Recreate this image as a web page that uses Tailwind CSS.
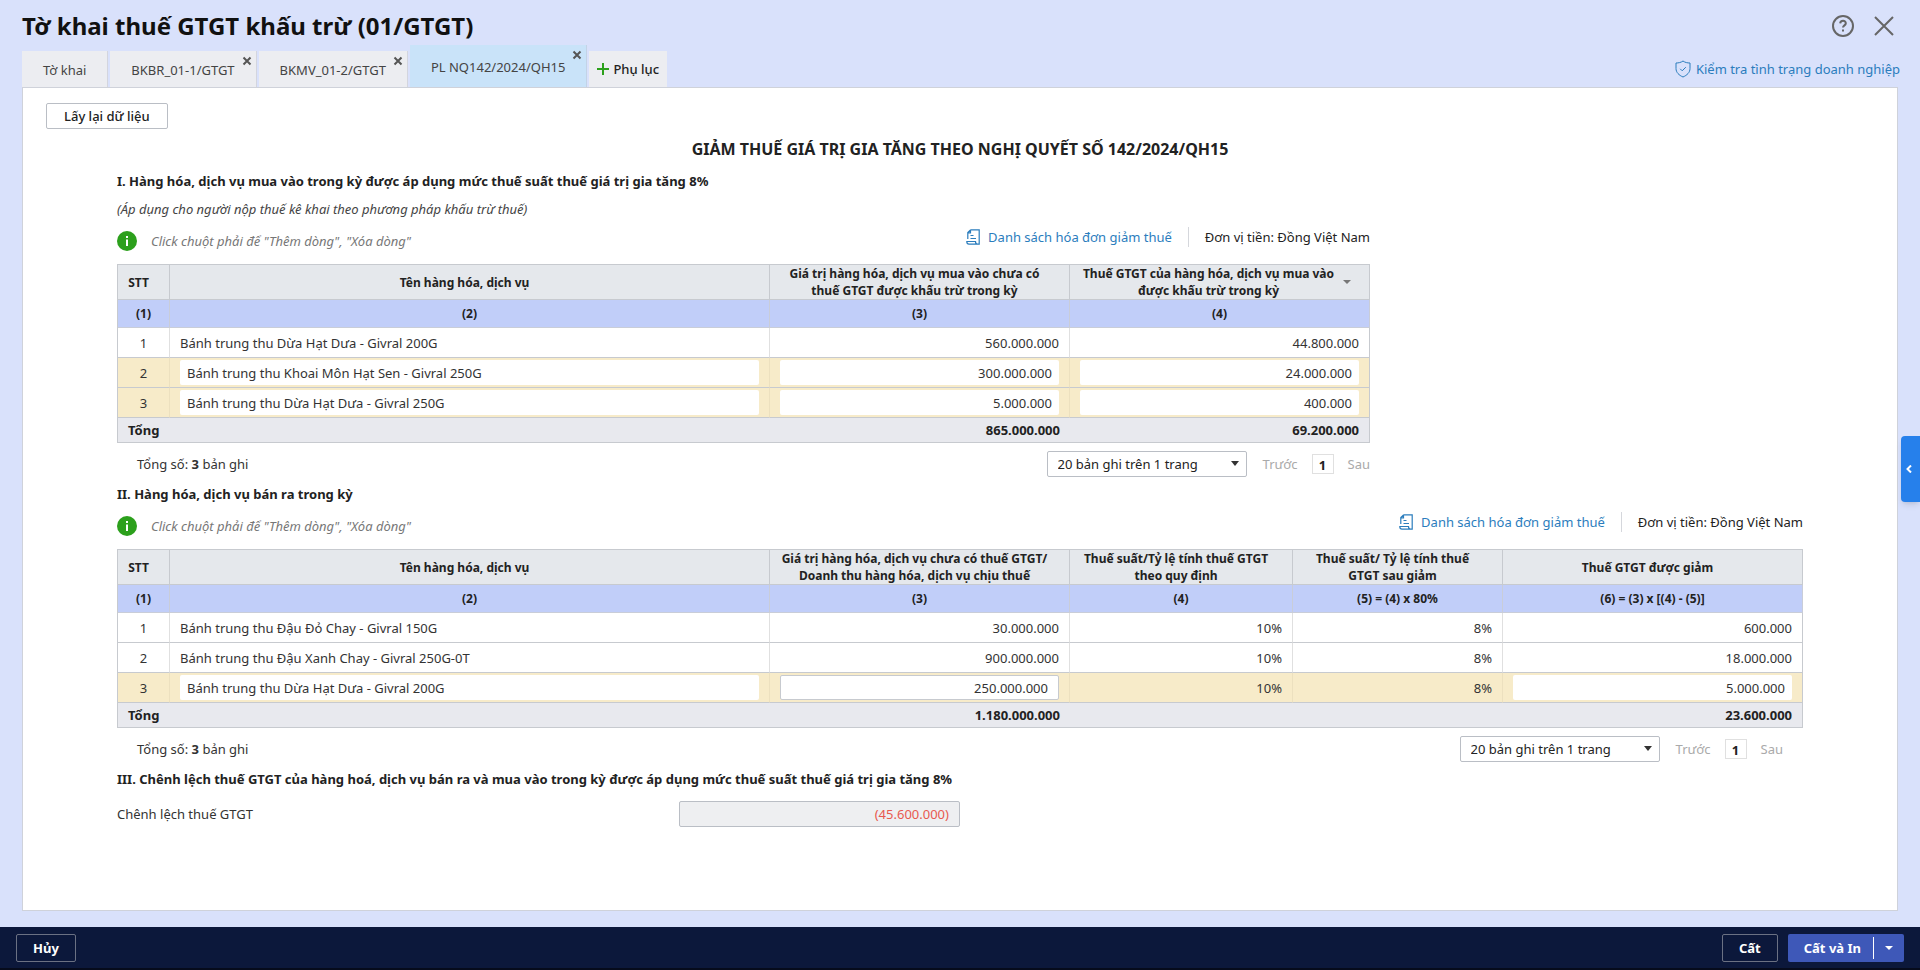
<!DOCTYPE html>
<html lang="vi">
<head>
  <meta charset="UTF-8">
  <meta name="viewport" content="width=device-width, initial-scale=1.0">
  <title>Tờ khai thuế GTGT khấu trừ (01/GTGT)</title>
  <script src="https://cdn.jsdelivr.net/npm/@tailwindcss/browser@4"></script>
</head>
<body class="min-h-screen flex flex-col bg-[#d9e1fb] font-['Noto_Sans',sans-serif] text-[13px] leading-5 text-[#222]">
  <!-- Header -->
  <header class="flex items-center justify-between h-[45px] pt-[7px] pl-[22px] pr-6">
    <h1 class="text-2xl font-bold text-[#111]">Tờ khai thuế GTGT khấu trừ (01/GTGT)</h1>
    <div class="flex items-center gap-[17px]">
      <button type="button" aria-label="Trợ giúp" class="text-[#666]">
        <svg class="size-6" viewBox="0 0 24 24" fill="none" stroke="currentColor" stroke-width="2">
          <circle cx="12" cy="12" r="10"/>
          <path d="M9.2 9.4c.2-3.6 5.8-3.4 5.6 0-.1 2-2.8 2-2.8 4.2M12 15.4v2"/>
        </svg>
      </button>
      <button type="button" aria-label="Đóng" class="text-[#666]">
        <svg class="size-6" viewBox="0 0 24 24" fill="none" stroke="currentColor" stroke-width="2">
          <path d="M3 3l18 18M21 3L3 21"/>
        </svg>
      </button>
    </div>
  </header>

  <!-- Tabs -->
  <nav class="flex items-end justify-between h-[42px] pl-[22px] pr-5">
    <div class="flex items-end gap-0.5">
      <button type="button" class="h-9 px-[21px] pt-0.5 bg-[#ecedf1] border-r border-[#d3d5de] text-[#444]">Tờ khai</button>
      <div class="relative">
        <button type="button" class="h-9 px-[21px] pt-0.5 bg-[#ecedf1] border-r border-[#d3d5de] text-[#444]">BKBR_01-1/GTGT</button>
        <button type="button" aria-label="Đóng BKBR_01-1/GTGT" class="absolute top-1 right-1 text-[#555]">
          <svg class="size-3" viewBox="0 0 12 12" fill="none" stroke="currentColor" stroke-width="2"><path d="M2.500 2.500l7 7M9.500 2.500l-7 7"/></svg>
        </button>
      </div>
      <div class="relative">
        <button type="button" class="h-9 px-[21px] pt-0.5 bg-[#ecedf1] border-r border-[#d3d5de] text-[#444]">BKMV_01-2/GTGT</button>
        <button type="button" aria-label="Đóng BKMV_01-2/GTGT" class="absolute top-1 right-1 text-[#555]">
          <svg class="size-3" viewBox="0 0 12 12" fill="none" stroke="currentColor" stroke-width="2"><path d="M2.500 2.500l7 7M9.500 2.500l-7 7"/></svg>
        </button>
      </div>
      <div class="relative">
        <button type="button" class="h-[42px] px-[21px] pt-0.5 bg-[#c9e3f9] border-r border-[#c3d3e6] text-[#444]">PL NQ142/2024/QH15</button>
        <button type="button" aria-label="Đóng PL NQ142/2024/QH15" class="absolute top-1 right-1 text-[#555]">
          <svg class="size-3" viewBox="0 0 12 12" fill="none" stroke="currentColor" stroke-width="2"><path d="M2.500 2.500l7 7M9.500 2.500l-7 7"/></svg>
        </button>
      </div>
      <button type="button" class="flex items-center gap-1 h-9 px-2 bg-[#ecedf1] font-medium">
        <svg class="size-3 text-[#2ca01c]" viewBox="0 0 12 12" fill="none" stroke="currentColor" stroke-width="2"><path d="M6 0v12M0 6h12"/></svg>
        Phụ lục
      </button>
    </div>
    <a href="#" class="flex items-center gap-1 h-9 text-[#2b7dbd]">
      <svg class="size-[18px]" viewBox="0 0 18 18" fill="none" stroke="currentColor">
        <path d="M9 1c2 1.500 4.500 2 7 2v5.500c0 4-3 6.700-7 8.500-4-1.800-7-4.500-7-8.500V3c2.500 0 5-.5 7-2z"/>
        <path d="M6.200 8.800l2 2 3.600-3.600"/>
      </svg>
      Kiểm tra tình trạng doanh nghiệp
    </a>
  </nav>

  <!-- Form -->
  <main class="flex-1 mx-[22px] mb-4 bg-white border border-[#cfd2da] pt-[15px]">
    <button type="button" class="block ml-[23px] h-[26px] px-[17px] border border-[#babec5] rounded-xs font-medium">Lấy lại dữ liệu</button>

    <div class="px-[94px]">
      <h2 class="mt-2 text-center text-base font-bold">GIẢM THUẾ GIÁ TRỊ GIA TĂNG THEO NGHỊ QUYẾT SỐ 142/2024/QH15</h2>

      <!-- Section I -->
      <section class="max-w-[1253px]">
        <h3 class="mt-2.5 font-bold">I. Hàng hóa, dịch vụ mua vào trong kỳ được áp dụng mức thuế suất thuế giá trị gia tăng 8%</h3>
        <p class="mt-2 italic text-[#444]">(Áp dụng cho người nộp thuế kê khai theo phương pháp khấu trừ thuế)</p>
        <div class="flex items-start justify-between h-[37px] mt-2">
          <p class="flex items-center gap-3.5 pt-1 italic text-[#777]">
            <svg class="size-5" viewBox="0 0 20 20"><circle cx="10" cy="10" r="10" fill="#2ca01c"/><path d="M9 5h2v2H9zM9 8.500h2V15H9z" fill="#fff"/></svg>
            Click chuột phải để "Thêm dòng", "Xóa dòng"
          </p>
          <div class="flex items-center">
            <a href="#" class="flex items-center gap-2 text-[#2b7dbd]">
              <svg class="w-3.5 h-4" viewBox="0 0 14 16" fill="none" stroke="currentColor" stroke-width="1.200">
                <path d="M4.500.8h8.700v14.400H3c-1.600 0-2.200-1-2.200-2.700h8.700c0 1.700.6 2.700 2 2.700M4.500.8L1.800 3.500v6.500M4.500.8v3H1.800M4.500 6.500h3M4.500 9.500h5.500"/>
              </svg>
              Danh sách hóa đơn giảm thuế
            </a>
            <span class="ml-4 pl-4 border-l border-[#d5d7dc]">Đơn vị tiền: Đồng Việt Nam</span>
          </div>
        </div>
        <table class="w-full table-fixed border-separate border-spacing-0 border-l border-t border-[#c7cacf]">
          <colgroup><col class="w-[52px]"><col><col class="w-[300px]"><col class="w-[300px]"></colgroup>
          <thead class="text-xs leading-[17px]">
            <tr class="h-[35px] bg-[#e5e8ec] *:border-r *:border-b *:border-[#c7cacf] *:pl-2 *:pr-[18px]">
              <th>STT</th>
              <th>Tên hàng hóa, dịch vụ</th>
              <th>Giá trị hàng hóa, dịch vụ mua vào chưa có thuế GTGT được khấu trừ trong kỳ</th>
              <th>
                <div class="flex items-center gap-1">
                  <span>Thuế GTGT của hàng hóa, dịch vụ mua vào được khấu trừ trong kỳ</span>
                  <svg class="w-2 h-1 shrink-0 text-[#777]" viewBox="0 0 8 4"><path d="M0 0h8L4 4z" fill="currentColor"/></svg>
                </div>
              </th>
            </tr>
            <tr class="h-7 bg-[#c1cef9] *:border-r *:border-b *:border-[#c9cdd8]">
              <th>(1)</th><th>(2)</th><th>(3)</th><th>(4)</th>
            </tr>
          </thead>
          <tbody class="text-[#333]">
            <tr class="h-[30px] *:border-r *:border-b *:border-r-[#e0e0e0] *:border-b-[#c7cacf] *:px-2.5 *:last:border-r-[#c7cacf]">
              <td class="text-center">1</td>
              <td>Bánh trung thu Dừa Hạt Dưa - Givral 200G</td>
              <td class="text-right">560.000.000</td>
              <td class="text-right">44.800.000</td>
            </tr>
            <tr class="h-[30px] bg-[#f7ebc9] *:border-r *:border-b *:border-r-[#ece0bf] *:border-b-[#c7cacf] *:px-2.5 *:last:border-r-[#c7cacf]">
              <td class="text-center">2</td>
              <td><input type="text" aria-label="Tên hàng hóa, dịch vụ dòng 2" value="Bánh trung thu Khoai Môn Hạt Sen - Givral 250G" class="block w-full h-[25px] px-[7px] bg-white rounded-xs"></td>
              <td><input type="text" aria-label="Giá trị dòng 2" value="300.000.000" class="block w-full h-[25px] px-[7px] bg-white rounded-xs text-right"></td>
              <td><input type="text" aria-label="Thuế GTGT dòng 2" value="24.000.000" class="block w-full h-[25px] px-[7px] bg-white rounded-xs text-right"></td>
            </tr>
            <tr class="h-[30px] bg-[#f7ebc9] *:border-r *:border-b *:border-r-[#ece0bf] *:border-b-[#c7cacf] *:px-2.5 *:last:border-r-[#c7cacf]">
              <td class="text-center">3</td>
              <td><input type="text" aria-label="Tên hàng hóa, dịch vụ dòng 3" value="Bánh trung thu Dừa Hạt Dưa - Givral 250G" class="block w-full h-[25px] px-[7px] bg-white rounded-xs"></td>
              <td><input type="text" aria-label="Giá trị dòng 3" value="5.000.000" class="block w-full h-[25px] px-[7px] bg-white rounded-xs text-right"></td>
              <td><input type="text" aria-label="Thuế GTGT dòng 3" value="400.000" class="block w-full h-[25px] px-[7px] bg-white rounded-xs text-right"></td>
            </tr>
          </tbody>
          <tfoot class="font-bold">
            <tr class="h-[25px] bg-[#e8e9ee] *:border-b *:border-[#c7cacf] *:px-2.5 *:last:border-r">
              <td colspan="2">Tổng</td>
              <td class="text-right">865.000.000</td>
              <td class="text-right">69.200.000</td>
            </tr>
          </tfoot>
        </table>
        <div class="flex items-center justify-between mt-2 pl-5">
          <p class="text-[#333]">Tổng số: <b>3</b> bản ghi</p>
          <div class="flex items-center">
            <div class="relative">
              <select aria-label="Số bản ghi trên trang" class="block appearance-none w-[200px] h-[26px] px-2.5 bg-white border border-[#babec5] rounded-xs">
                <option>20 bản ghi trên 1 trang</option>
              </select>
              <svg class="absolute right-2 top-2.5 w-2 h-[5px] pointer-events-none" viewBox="0 0 8 5"><path d="M0 0h8L4 5z" fill="#333"/></svg>
            </div>
            <button type="button" class="ml-4 text-[#aaa]">Trước</button>
            <button type="button" class="mx-3.5 w-[22px] h-5 border border-[#e0e0e0] font-bold">1</button>
            <button type="button" class="text-[#aaa]">Sau</button>
          </div>
        </div>
      </section>

      <!-- Section II -->
      <section>
        <h3 class="mt-[7px] font-bold">II. Hàng hóa, dịch vụ bán ra trong kỳ</h3>
        <div class="flex items-start justify-between h-[37px] mt-2">
          <p class="flex items-center gap-3.5 pt-1 italic text-[#777]">
            <svg class="size-5" viewBox="0 0 20 20"><circle cx="10" cy="10" r="10" fill="#2ca01c"/><path d="M9 5h2v2H9zM9 8.500h2V15H9z" fill="#fff"/></svg>
            Click chuột phải để "Thêm dòng", "Xóa dòng"
          </p>
          <div class="flex items-center">
            <a href="#" class="flex items-center gap-2 text-[#2b7dbd]">
              <svg class="w-3.5 h-4" viewBox="0 0 14 16" fill="none" stroke="currentColor" stroke-width="1.200">
                <path d="M4.500.8h8.700v14.400H3c-1.600 0-2.200-1-2.200-2.700h8.700c0 1.700.6 2.700 2 2.700M4.500.8L1.800 3.500v6.500M4.500.8v3H1.800M4.500 6.500h3M4.500 9.500h5.500"/>
              </svg>
              Danh sách hóa đơn giảm thuế
            </a>
            <span class="ml-4 pl-4 border-l border-[#d5d7dc]">Đơn vị tiền: Đồng Việt Nam</span>
          </div>
        </div>
        <table class="w-full table-fixed border-separate border-spacing-0 border-l border-t border-[#c7cacf]">
          <colgroup><col class="w-[52px]"><col><col class="w-[300px]"><col class="w-[223px]"><col class="w-[210px]"><col class="w-[300px]"></colgroup>
          <thead class="text-xs leading-[17px]">
            <tr class="h-[35px] bg-[#e5e8ec] *:border-r *:border-b *:border-[#c7cacf] *:pl-2 *:pr-[18px]">
              <th>STT</th>
              <th>Tên hàng hóa, dịch vụ</th>
              <th>Giá trị hàng hóa, dịch vụ chưa có thuế GTGT/ Doanh thu hàng hóa, dịch vụ chịu thuế</th>
              <th>Thuế suất/Tỷ lệ tính thuế GTGT theo quy định</th>
              <th>Thuế suất/ Tỷ lệ tính thuế GTGT sau giảm</th>
              <th>Thuế GTGT được giảm</th>
            </tr>
            <tr class="h-7 bg-[#c1cef9] *:border-r *:border-b *:border-[#c9cdd8]">
              <th>(1)</th><th>(2)</th><th>(3)</th><th>(4)</th><th>(5) = (4) x 80%</th><th>(6) = (3) x [(4) - (5)]</th>
            </tr>
          </thead>
          <tbody class="text-[#333]">
            <tr class="h-[30px] *:border-r *:border-b *:border-r-[#e0e0e0] *:border-b-[#c7cacf] *:px-2.5 *:last:border-r-[#c7cacf]">
              <td class="text-center">1</td>
              <td>Bánh trung thu Đậu Đỏ Chay - Givral 150G</td>
              <td class="text-right">30.000.000</td>
              <td class="text-right">10%</td>
              <td class="text-right">8%</td>
              <td class="text-right">600.000</td>
            </tr>
            <tr class="h-[30px] *:border-r *:border-b *:border-r-[#e0e0e0] *:border-b-[#c7cacf] *:px-2.5 *:last:border-r-[#c7cacf]">
              <td class="text-center">2</td>
              <td>Bánh trung thu Đậu Xanh Chay - Givral 250G-0T</td>
              <td class="text-right">900.000.000</td>
              <td class="text-right">10%</td>
              <td class="text-right">8%</td>
              <td class="text-right">18.000.000</td>
            </tr>
            <tr class="h-[30px] bg-[#f7ebc9] *:border-r *:border-b *:border-r-[#ece0bf] *:border-b-[#c7cacf] *:px-2.5 *:last:border-r-[#c7cacf]">
              <td class="text-center">3</td>
              <td><input type="text" aria-label="Tên hàng hóa, dịch vụ dòng 3" value="Bánh trung thu Dừa Hạt Dưa - Givral 200G" class="block w-full h-[25px] px-[7px] bg-white rounded-xs"></td>
              <td><input type="text" aria-label="Giá trị dòng 3" value="250.000.000" class="block w-full h-[25px] px-2.5 bg-white border border-[#c7cacf] rounded-xs text-right"></td>
              <td class="text-right">10%</td>
              <td class="text-right">8%</td>
              <td><input type="text" aria-label="Thuế GTGT được giảm dòng 3" value="5.000.000" class="block w-full h-[25px] px-[7px] bg-white rounded-xs text-right"></td>
            </tr>
          </tbody>
          <tfoot class="font-bold">
            <tr class="h-[25px] bg-[#e8e9ee] *:border-b *:border-[#c7cacf] *:px-2.5 *:last:border-r">
              <td colspan="2">Tổng</td>
              <td class="text-right">1.180.000.000</td>
              <td></td>
              <td></td>
              <td class="text-right">23.600.000</td>
            </tr>
          </tfoot>
        </table>
        <div class="flex items-center justify-between mt-2 px-5">
          <p class="text-[#333]">Tổng số: <b>3</b> bản ghi</p>
          <div class="flex items-center">
            <div class="relative">
              <select aria-label="Số bản ghi trên trang" class="block appearance-none w-[200px] h-[26px] px-2.5 bg-white border border-[#babec5] rounded-xs">
                <option>20 bản ghi trên 1 trang</option>
              </select>
              <svg class="absolute right-2 top-2.5 w-2 h-[5px] pointer-events-none" viewBox="0 0 8 5"><path d="M0 0h8L4 5z" fill="#333"/></svg>
            </div>
            <button type="button" class="ml-4 text-[#aaa]">Trước</button>
            <button type="button" class="mx-3.5 w-[22px] h-5 border border-[#e0e0e0] font-bold">1</button>
            <button type="button" class="text-[#aaa]">Sau</button>
          </div>
        </div>
      </section>

      <!-- Section III -->
      <section>
        <h3 class="mt-[7px] font-bold">III. Chênh lệch thuế GTGT của hàng hoá, dịch vụ bán ra và mua vào trong kỳ được áp dụng mức thuế suất thuế giá trị gia tăng 8%</h3>
        <div class="flex items-center mt-3">
          <label for="difference" class="w-1/3 text-[#333]">Chênh lệch thuế GTGT</label>
          <input id="difference" type="text" readonly value="(45.600.000)" class="w-1/6 h-[26px] px-2.5 bg-[#eeeff1] border border-[#babec5] rounded-xs text-right text-[#e8594f]">
        </div>
      </section>
    </div>
  </main>

  <!-- Side panel handle -->
  <button type="button" aria-label="Mở bảng bên" class="fixed right-0 top-[436px] flex items-center w-[19px] h-[66px] pl-1 bg-[#2680eb] rounded-l-sm shadow-md text-white">
    <svg class="size-2" viewBox="0 0 8 8" fill="none" stroke="currentColor" stroke-width="2"><path d="M6 .5L2.500 4 6 7.500"/></svg>
  </button>

  <!-- Footer -->
  <footer class="flex items-center justify-between h-[43px] px-4 bg-[#0c183b] border-b-2 border-[#060b1c] text-white font-bold">
    <button type="button" class="h-7 px-4 border border-[#6b7183] rounded-xs">Hủy</button>
    <div class="flex items-center gap-2.5">
      <button type="button" class="h-7 px-4 border border-[#6b7183] rounded-xs">Cất</button>
      <div class="flex items-center h-7 bg-[#3e58b8] rounded-xs">
        <button type="button" class="h-7 pl-4 pr-3">Cất và In</button>
        <button type="button" aria-label="Thêm lựa chọn" class="flex items-center justify-center w-[31px] h-[22px] border-l border-white">
          <svg class="w-2 h-1" viewBox="0 0 8 4"><path d="M0 0h8L4 4z" fill="#fff"/></svg>
        </button>
      </div>
    </div>
  </footer>
</body>
</html>
